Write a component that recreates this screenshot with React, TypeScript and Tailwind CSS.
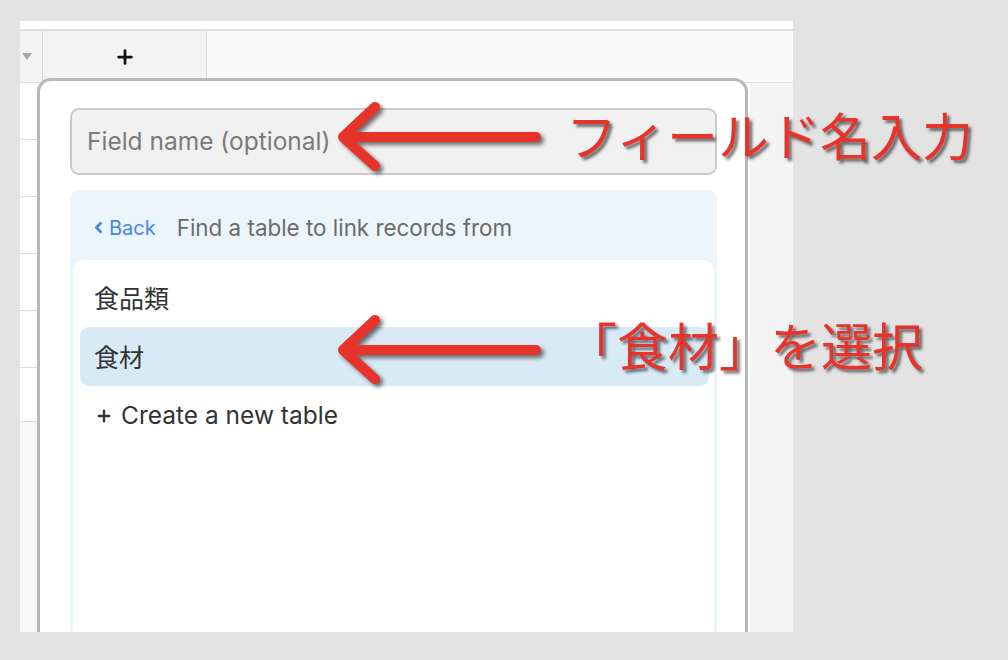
import { ChevronLeft, Plus } from "lucide-react";

const ui = { fontFamily: 'Inter, "Noto Sans CJK JP", sans-serif' };
const jp = { fontFamily: '"Noto Sans CJK JP", sans-serif' };

function Grid() {
    const rows = [0, 1, 2, 3, 4, 5];
    return (
        <>
            <div className="h-[8px] bg-white shrink-0" />
            <div className="h-[54px] shrink-0 flex border-t-2 border-b border-[#dedede] bg-[#fafafa]">
                <div className="w-[23px] bg-[#f4f4f4] border-r border-[#d8d8d8] flex items-center">
                    <div className="w-0 h-0 ml-[2px] border-l-[5px] border-r-[5px] border-t-[7px] border-l-transparent border-r-transparent border-t-[#a8a8a8]" />
                </div>
                <div className="w-[164px] bg-[#f3f3f3] border-r border-[#d8d8d8] flex items-center justify-center">
                    <Plus size={22} strokeWidth={3} className="text-[#111]" />
                </div>
                <div className="flex-1" />
            </div>
            <div className="flex-1 flex">
                <div className="w-[23px] flex flex-col bg-[#f8f8f8]">
                    {rows.map((r) => (
                        <div key={r} className={`${r === 5 ? "h-[54px]" : "h-[57px]"} bg-white border-b border-[#dcdcdc]`} />
                    ))}
                </div>
                <div className="flex-1 bg-white" />
                <div className="w-[43px] bg-[#f4f4f4]" />
            </div>
        </>
    );
}

function Popup() {
    return (
        <div className="absolute left-[17px] top-[57px] w-[711px] h-[620px] bg-white border-[3px] border-[#b8b8b8] rounded-[14px] pt-[27px] pl-[30px] pr-[28px]" style={ui}>
            <div className="h-[67px] bg-[#f1f1f1] border-2 border-[#cbcbcb] rounded-[9px] flex items-center pl-[15px] text-[24.5px] text-[#7a7a7a]">
                Field name (optional)
            </div>
            <div className="mt-[15px] bg-[#ecf5fc] rounded-[9px] px-[3px] h-[480px]">
                <div className="h-[70px] flex items-center pt-[5px] pl-[17px] text-[22.4px]">
                    <ChevronLeft size={17} strokeWidth={4} className="text-[#4a87e4]" />
                    <span className="ml-[2px] text-[#4a87e4] text-[20px]">Back</span>
                    <span className="ml-[21px] text-[#6b6b6b]">Find a table to link records from</span>
                </div>
                <div className="bg-white rounded-[10px] pt-[8px] pl-[7px] pr-[5px] h-[400px] text-[24.5px] text-[#333]">
                    <div className="h-[59px] flex items-center pl-[14px] text-[25px]" style={jp}>食品類</div>
                    <div className="h-[59px] flex items-center pl-[14px] text-[25px] bg-[#d8eaf6] rounded-[9px]" style={jp}>食材</div>
                    <div className="h-[59px] flex items-center pl-[15px]">
                        <Plus size={18} strokeWidth={3.2} className="text-[#333]" />
                        <span className="ml-[8px]">Create a new table</span>
                    </div>
                </div>
            </div>
        </div>
    );
}

function Annotations() {
    const label = "absolute text-[51px] leading-none font-normal text-[#e8332a] [text-shadow:3px_3px_3px_rgba(0,0,0,0.55)] whitespace-nowrap";
    return (
        <>
            <svg className="absolute left-0 top-0" width="1008" height="660" style={{ filter: "drop-shadow(3px 3px 2px rgba(0,0,0,0.55))" }}>
                <g stroke="#e8332a" strokeWidth="10" strokeLinecap="round" strokeLinejoin="round" fill="none">
                    <path d="M536 137 L347 137" />
                    <path d="M375 107 L343 137 L375 166" />
                    <path d="M536 350 L347 350" />
                    <path d="M375 320 L343 350 L375 379" />
                </g>
            </svg>
            <div className={`${label} left-[566px] top-[109px]`} style={jp}>フィールド名入力</div>
            <div className={`${label} left-[566px] top-[319px]`} style={jp}>「食材」を選択</div>
        </>
    );
}

export default function App() {
    return (
        <div className="relative w-[1008px] h-[660px] bg-[#e3e3e3] pt-[21px] pl-[20px] overflow-hidden">
            <div className="relative w-[773px] h-[611px] bg-white flex flex-col overflow-hidden">
                <Grid />
                <Popup />
            </div>
            <Annotations />
        </div>
    );
}
